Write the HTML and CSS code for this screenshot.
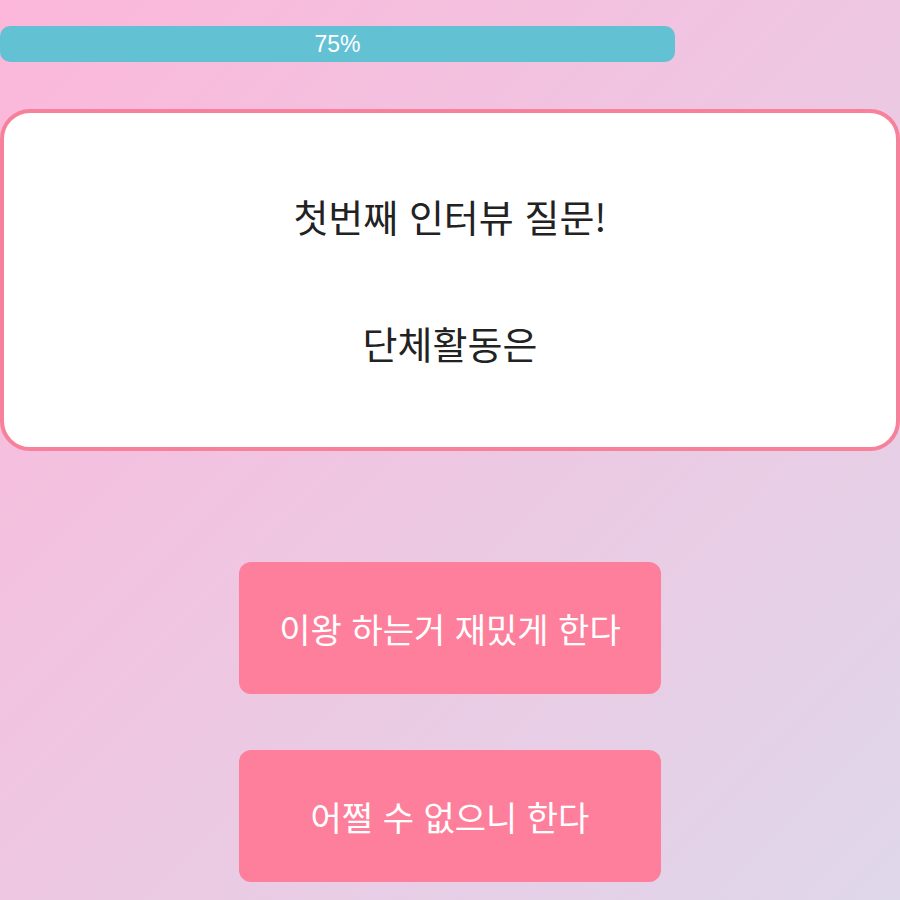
FILE: index.html
```html
<!DOCTYPE html>
<html lang="ko">
<head>
  <meta charset="UTF-8">
  <meta name="viewport" content="width=device-width, initial-scale=1.0">
  <title>인터뷰 질문</title>
  <link rel="stylesheet" href="styles.css">
</head>
<body>
  <div class="progress">
    <div class="progress-bar" style="width: 75%;">75%</div>
  </div>

  <div class="question-card">
    <p class="question-title">첫번째 인터뷰 질문!</p>
    <p class="question-text">단체활동은</p>
  </div>

  <div class="answers">
    <button type="button" class="answer-btn">이왕 하는거 재밌게 한다</button>
    <button type="button" class="answer-btn">어쩔 수 없으니 한다</button>
  </div>
</body>
</html>
```

FILE: styles.css
```css
body {
  margin: 0;
  height: 900px;
  overflow: hidden;
  background: linear-gradient(to bottom right, #fcb7da, #dfd7ea);
  font-family: "Noto Sans CJK KR", "Noto Sans", sans-serif;
}

.progress {
  width: 100%;
  height: 36px;
  margin-top: 26px;
}

.progress-bar {
  height: 36px;
  line-height: 36px;
  background: #63c1d4;
  border-radius: 10px;
  color: #fff;
  text-align: center;
  font-family: "Liberation Sans", Arial, sans-serif;
  font-size: 23px;
}

.question-card {
  box-sizing: border-box;
  height: 342px;
  margin-top: 47px;
  background: #fff;
  border: 4px solid #f7809a;
  border-radius: 30px;
  display: flex;
  flex-direction: column;
  align-items: center;
  padding-top: 75px;
  gap: 71px;
  color: #222;
}

.question-card p {
  margin: 0;
  font-size: 38px;
  line-height: 56px;
}

.answers {
  display: flex;
  flex-direction: column;
  align-items: center;
  gap: 56px;
  margin-top: 111px;
}

.answer-btn {
  width: 422px;
  height: 132px;
  border: none;
  border-radius: 12px;
  background: #fe7f9b;
  color: #fff;
  font-family: "Noto Sans CJK KR", "Noto Sans", sans-serif;
  font-size: 34px;
  cursor: pointer;
}
```
